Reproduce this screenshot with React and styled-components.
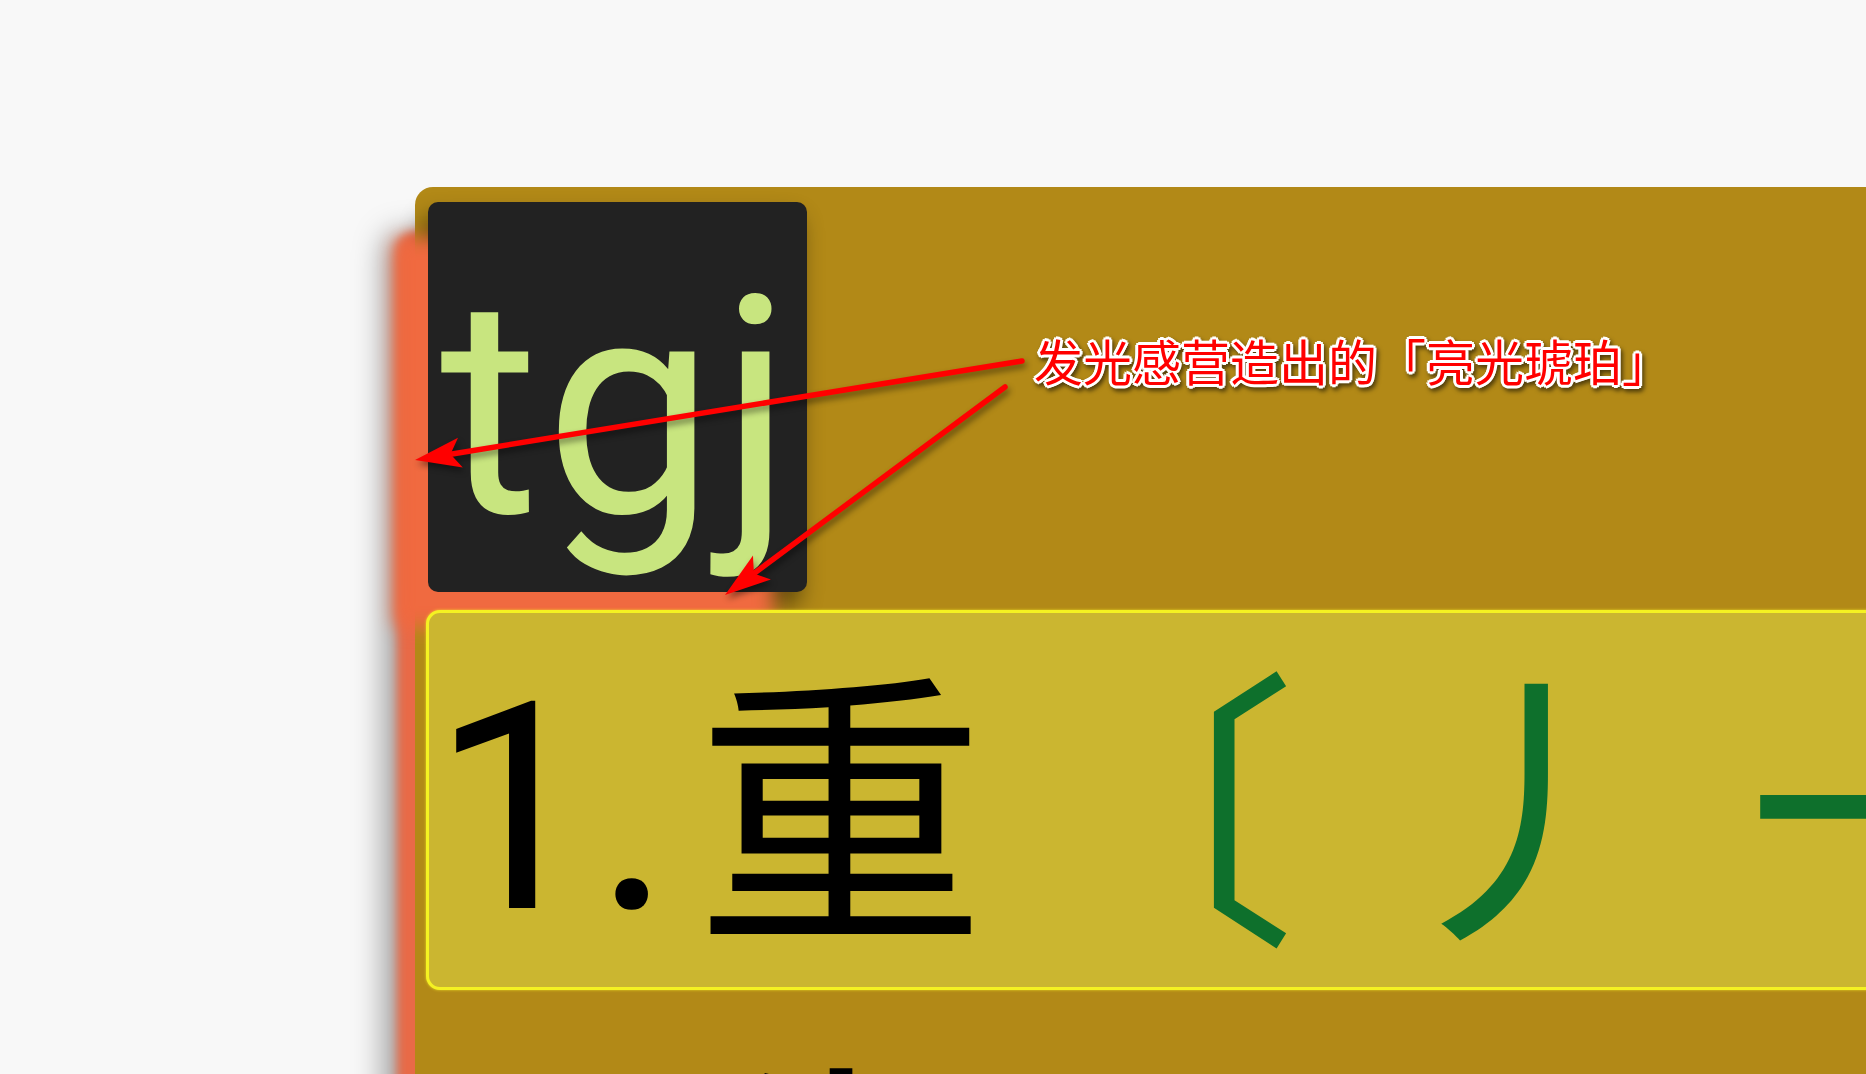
import styled, { createGlobalStyle } from "styled-components";

const GlobalStyle = createGlobalStyle`
  html, body {
    margin: 0;
    padding: 0;
    background: #f8f8f8;
    overflow: hidden;
  }
  body {
    font-family: Roboto, "Noto Sans CJK SC", sans-serif;
  }
`;

const Page = styled.div`
  position: relative;
  width: 1866px;
  height: 1074px;
  box-sizing: border-box;
  padding: 187px 0 0 415px;
  overflow: hidden;
`;

const Panel = styled.div`
  width: 1700px;
  min-height: 1100px;
  box-sizing: border-box;
  padding: 15px 0 0 11px;
  background: #b28917;
  border-radius: 18px;
  box-shadow: -18px 45px 10px #e86a47, -32px 45px 30px rgba(0, 0, 0, 0.35);
`;

const LogoBox = styled.div`
  width: 379px;
  height: 390px;
  margin-left: 2px;
  box-sizing: border-box;
  padding: 56px 0 0 12px;
  background: #222222;
  border-radius: 10px;
  box-shadow: -34px 36px 18px #f06a40, -6px 14px 22px rgba(0, 0, 0, 0.45);
  color: #c8e57f;
  font-family: Roboto, sans-serif;
  font-size: 304px;
  line-height: 300px;
  letter-spacing: 5px;
  overflow: hidden;
`;

const Entry = styled.div`
  height: 380px;
  box-sizing: border-box;
  margin-top: ${(p) => (p.$active ? "18px" : "12px")};
  padding-left: 3px;
  border: 3px solid ${(p) => (p.$active ? "#f5f222" : "transparent")};
  border-radius: 14px;
  background: ${(p) => (p.$active ? "#cbb630" : "transparent")};
  box-shadow: ${(p) => (p.$active ? "0 0 3px rgba(255, 250, 40, 0.7)" : "none")};
  color: #000;
  font-family: "Noto Sans CJK SC", sans-serif;
  font-size: 290px;
  line-height: 362px;
  white-space: nowrap;
  overflow: hidden;
`;

const Num = styled.span`
  margin-right: 24px;
  font-family: Roboto, sans-serif;
  line-height: 0;
  vertical-align: 12px;
`;

const Strokes = styled.span`
  margin-left: 22px;
  color: #0e702c;
  letter-spacing: 80px;
`;

const Overlay = styled.div`
  position: absolute;
  inset: 0;
  pointer-events: none;
`;

const Note = styled.div`
  position: absolute;
  left: 1034px;
  top: 331px;
  color: #ff0000;
  font-family: "Noto Sans CJK SC", sans-serif;
  font-size: 49px;
  line-height: 1.2;
  white-space: nowrap;
  text-shadow:
    3px 0 0 #fff, -3px 0 0 #fff, 0 3px 0 #fff, 0 -3px 0 #fff,
    2px 2px 0 #fff, -2px 2px 0 #fff, 2px -2px 0 #fff, -2px -2px 0 #fff;
  filter: drop-shadow(2px 3px 2px rgba(0, 0, 0, 0.55));
`;

const ArrowLayer = styled.svg`
  position: absolute;
  left: 0;
  top: 0;
  filter: drop-shadow(2px 4px 3px rgba(0, 0, 0, 0.45));
`;

function Arrow({ x1, y1, x2, y2 }) {
  const dx = x2 - x1;
  const dy = y2 - y1;
  const len = Math.hypot(dx, dy);
  const ux = dx / len;
  const uy = dy / len;
  const nx = -uy;
  const ny = ux;
  const L = 46;
  const W = 15;
  const bx = x2 - ux * L;
  const by = y2 - uy * L;
  const mx = x2 - ux * (L - 10);
  const my = y2 - uy * (L - 10);
  const pts = [
    [x2, y2],
    [bx + nx * W, by + ny * W],
    [mx, my],
    [bx - nx * W, by - ny * W],
  ]
    .map((p) => p.join(","))
    .join(" ");
  return (
    <g>
      <line
        x1={x1}
        y1={y1}
        x2={mx}
        y2={my}
        stroke="#ff0000"
        strokeWidth="5.5"
        strokeLinecap="round"
      />
      <polygon points={pts} fill="#ff0000" />
    </g>
  );
}

export default function App() {
  return (
    <>
      <GlobalStyle />
      <Page>
        <Panel>
          <LogoBox>tgj</LogoBox>
          <Entry $active>
            <Num>1.</Num>重<Strokes>〔丿一丨フ一一丨一一〕</Strokes>
          </Entry>
          <Entry>
            <Num>2.</Num>生
          </Entry>
        </Panel>
        <Overlay>
          <ArrowLayer width="1866" height="1074" viewBox="0 0 1866 1074">
            <Arrow x1={1022} y1={361} x2={415} y2={460} />
            <Arrow x1={1005} y1={387} x2={725} y2={595} />
          </ArrowLayer>
          <Note>发光感营造出的「亮光琥珀」</Note>
        </Overlay>
      </Page>
    </>
  );
}
